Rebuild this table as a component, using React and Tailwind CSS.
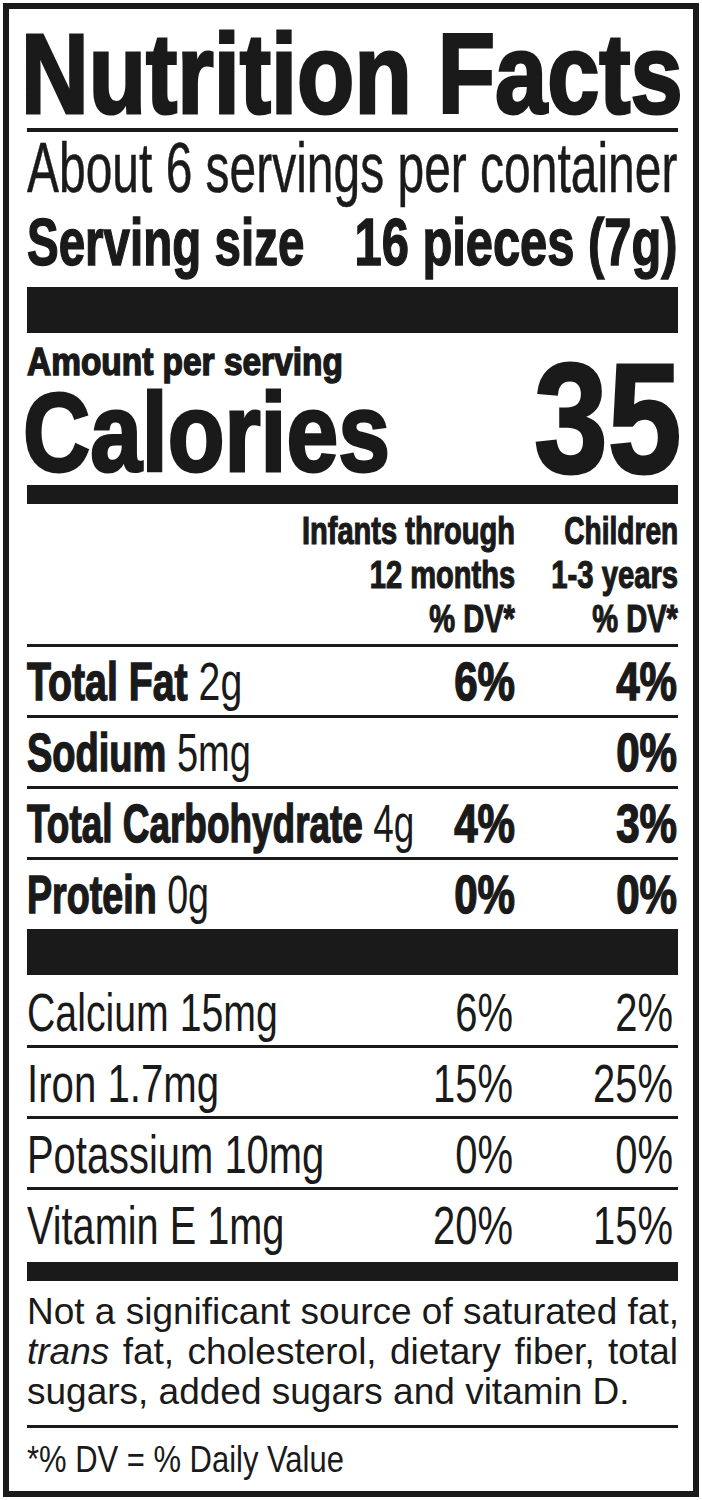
function Rule({ className }) {
  return <div className={`shrink-0 bg-[#1a1a1a] ${className}`} />;
}

function NutrientRow({ label, amount, sx, a, b }) {
  return (
    <div className="h-[68px] shrink-0 flex text-[54px] leading-[68px] whitespace-nowrap">
      <div className="flex-1 min-w-0">
        <span className={`inline-block origin-left ${sx}`}>
          <span className="font-bold [-webkit-text-stroke:1.5px_#1a1a1a]">{label}</span> {amount}
        </span>
      </div>
      <div className="w-[120px] flex justify-end font-bold">
        <span className="inline-block origin-right scale-x-[0.78] [-webkit-text-stroke:1.5px_#1a1a1a]">{a}</span>
      </div>
      <div className="w-[163px] pr-[1px] flex justify-end font-bold">
        <span className="inline-block origin-right scale-x-[0.78] [-webkit-text-stroke:1.5px_#1a1a1a]">{b}</span>
      </div>
    </div>
  );
}

function VitaminRow({ label, sx, a, b, pad }) {
  return (
    <div className={`shrink-0 flex text-[54px] leading-[65px] h-[65px] whitespace-nowrap box-content ${pad}`}>
      <div className="flex-1 min-w-0">
        <span className={`inline-block origin-left ${sx}`}>{label}</span>
      </div>
      <div className="w-[120px] pr-[2px] flex justify-end">
        <span className="inline-block origin-right scale-x-[0.74]">{a}</span>
      </div>
      <div className="w-[163px] pr-[5px] flex justify-end">
        <span className="inline-block origin-right scale-x-[0.74]">{b}</span>
      </div>
    </div>
  );
}

export default function App() {
  return (
    <div className="w-[702px] h-[1500px] overflow-hidden bg-white pt-[3px] pl-[3px] font-['Liberation_Sans',Arial,sans-serif] text-[#1a1a1a]">
      <div className="w-[696px] h-[1494px] border-[6px] border-[#1a1a1a] pl-[18px] pr-[15px] flex flex-col">
        {/* Title */}
        <div className="mt-[15px] h-[100px] shrink-0 text-[113px] leading-[100px] font-bold whitespace-nowrap">
          <span className="inline-block origin-left scale-x-[0.83] -ml-[6px] [-webkit-text-stroke:3px_#1a1a1a]">
            Nutrition Facts
          </span>
        </div>
        <Rule className="mt-[4px] h-[4px]" />

        <div className="mt-[6px] h-[60px] shrink-0 text-[70px] leading-[60px] whitespace-nowrap">
          <span className="inline-block origin-left scale-x-[0.685] [-webkit-text-stroke:0.5px_#1a1a1a]">
            About 6 servings per container
          </span>
        </div>

        <div className="mt-[14px] h-[60px] shrink-0 flex text-[66px] leading-[60px] font-bold whitespace-nowrap">
          <div className="flex-1 min-w-0">
            <span className="inline-block origin-left scale-x-[0.72] [-webkit-text-stroke:1.5px_#1a1a1a]">
              Serving size
            </span>
          </div>
          <div className="flex-1 min-w-0 flex justify-end">
            <span className="inline-block origin-right scale-x-[0.74] [-webkit-text-stroke:1.5px_#1a1a1a]">
              16 pieces (7g)
            </span>
          </div>
        </div>

        <Rule className="mt-[15px] h-[46px]" />

        {/* Calories */}
        <div className="shrink-0 flex justify-between items-start">
          <div className="flex flex-col">
            <div className="mt-[9px] h-[40px] text-[38px] leading-[40px] font-bold whitespace-nowrap">
              <span className="inline-block origin-left scale-x-[0.88] [-webkit-text-stroke:1.5px_#1a1a1a]">
                Amount per serving
              </span>
            </div>
            <div className="mt-[1px] h-[100px] text-[112px] leading-[100px] font-bold whitespace-nowrap">
              <span className="inline-block origin-left scale-x-[0.83] -ml-[4px] [-webkit-text-stroke:3px_#1a1a1a]">
                Calories
              </span>
            </div>
          </div>
          <div className="mt-[20px] h-[130px] flex justify-end text-[156px] leading-[130px] font-bold whitespace-nowrap">
            <span className="inline-block origin-right scale-x-[0.85] -mr-[4px] [-webkit-text-stroke:3px_#1a1a1a]">
              35
            </span>
          </div>
        </div>

        <Rule className="mt-[2px] h-[19px]" />

        {/* Column header */}
        <div className="mt-[5px] h-[132px] shrink-0 flex justify-end text-[39px] leading-[44px] font-bold whitespace-nowrap">
          <div className="flex flex-col items-end">
            <span className="h-[44px] inline-block origin-right scale-x-[0.745] [-webkit-text-stroke:1.2px_#1a1a1a]">Infants through</span>
            <span className="h-[44px] inline-block origin-right scale-x-[0.745] [-webkit-text-stroke:1.2px_#1a1a1a]">12 months</span>
            <span className="h-[44px] inline-block origin-right scale-x-[0.745] [-webkit-text-stroke:1.2px_#1a1a1a]">% DV*</span>
          </div>
          <div className="w-[163px] flex flex-col items-end">
            <span className="h-[44px] inline-block origin-right scale-x-[0.72] [-webkit-text-stroke:1.2px_#1a1a1a]">Children</span>
            <span className="h-[44px] inline-block origin-right scale-x-[0.75] [-webkit-text-stroke:1.2px_#1a1a1a]">1-3 years</span>
            <span className="h-[44px] inline-block origin-right scale-x-[0.745] [-webkit-text-stroke:1.2px_#1a1a1a]">% DV*</span>
          </div>
        </div>

        <Rule className="mt-[3px] h-[3px]" />
        <NutrientRow label="Total Fat" amount="2g" sx="scale-x-[0.727]" a="6%" b="4%" />
        <Rule className="h-[3px]" />
        <NutrientRow label="Sodium" amount="5mg" sx="scale-x-[0.704]" a="" b="0%" />
        <Rule className="h-[3px]" />
        <NutrientRow label="Total Carbohydrate" amount="4g" sx="scale-x-[0.684]" a="4%" b="3%" />
        <Rule className="h-[3px]" />
        <NutrientRow label="Protein" amount="0g" sx="scale-x-[0.697]" a="0%" b="0%" />

        <Rule className="mt-[1px] h-[46px]" />

        <VitaminRow label="Calcium 15mg" sx="scale-x-[0.727]" a="6%" b="2%" pad="pt-[5px]" />
        <Rule className="h-[3px]" />
        <VitaminRow label="Iron 1.7mg" sx="scale-x-[0.744]" a="15%" b="25%" pad="pt-[3px]" />
        <Rule className="h-[3px]" />
        <VitaminRow label="Potassium 10mg" sx="scale-x-[0.739]" a="0%" b="0%" pad="pt-[3px]" />
        <Rule className="h-[3px]" />
        <VitaminRow label="Vitamin E 1mg" sx="scale-x-[0.735]" a="20%" b="15%" pad="pt-[3px]" />

        <Rule className="mt-[4px] h-[19px]" />

        {/* Footnote */}
        <div className="mt-[11px] shrink-0 text-[37px] leading-[40px]">
          <div className="whitespace-nowrap [text-align-last:justify]">Not a significant source of saturated fat,</div>
          <div className="whitespace-nowrap [text-align-last:justify]">
            <i className="italic">trans</i> fat, cholesterol, dietary fiber, total
          </div>
          <div className="whitespace-nowrap">sugars, added sugars and vitamin D.</div>
        </div>

        <Rule className="mt-[13px] h-[3px]" />

        <div className="mt-[12px] h-[40px] shrink-0 text-[36px] leading-[40px] whitespace-nowrap">
          <span className="inline-block origin-left scale-x-[0.86]">*% DV = % Daily Value</span>
        </div>
      </div>
    </div>
  );
}
